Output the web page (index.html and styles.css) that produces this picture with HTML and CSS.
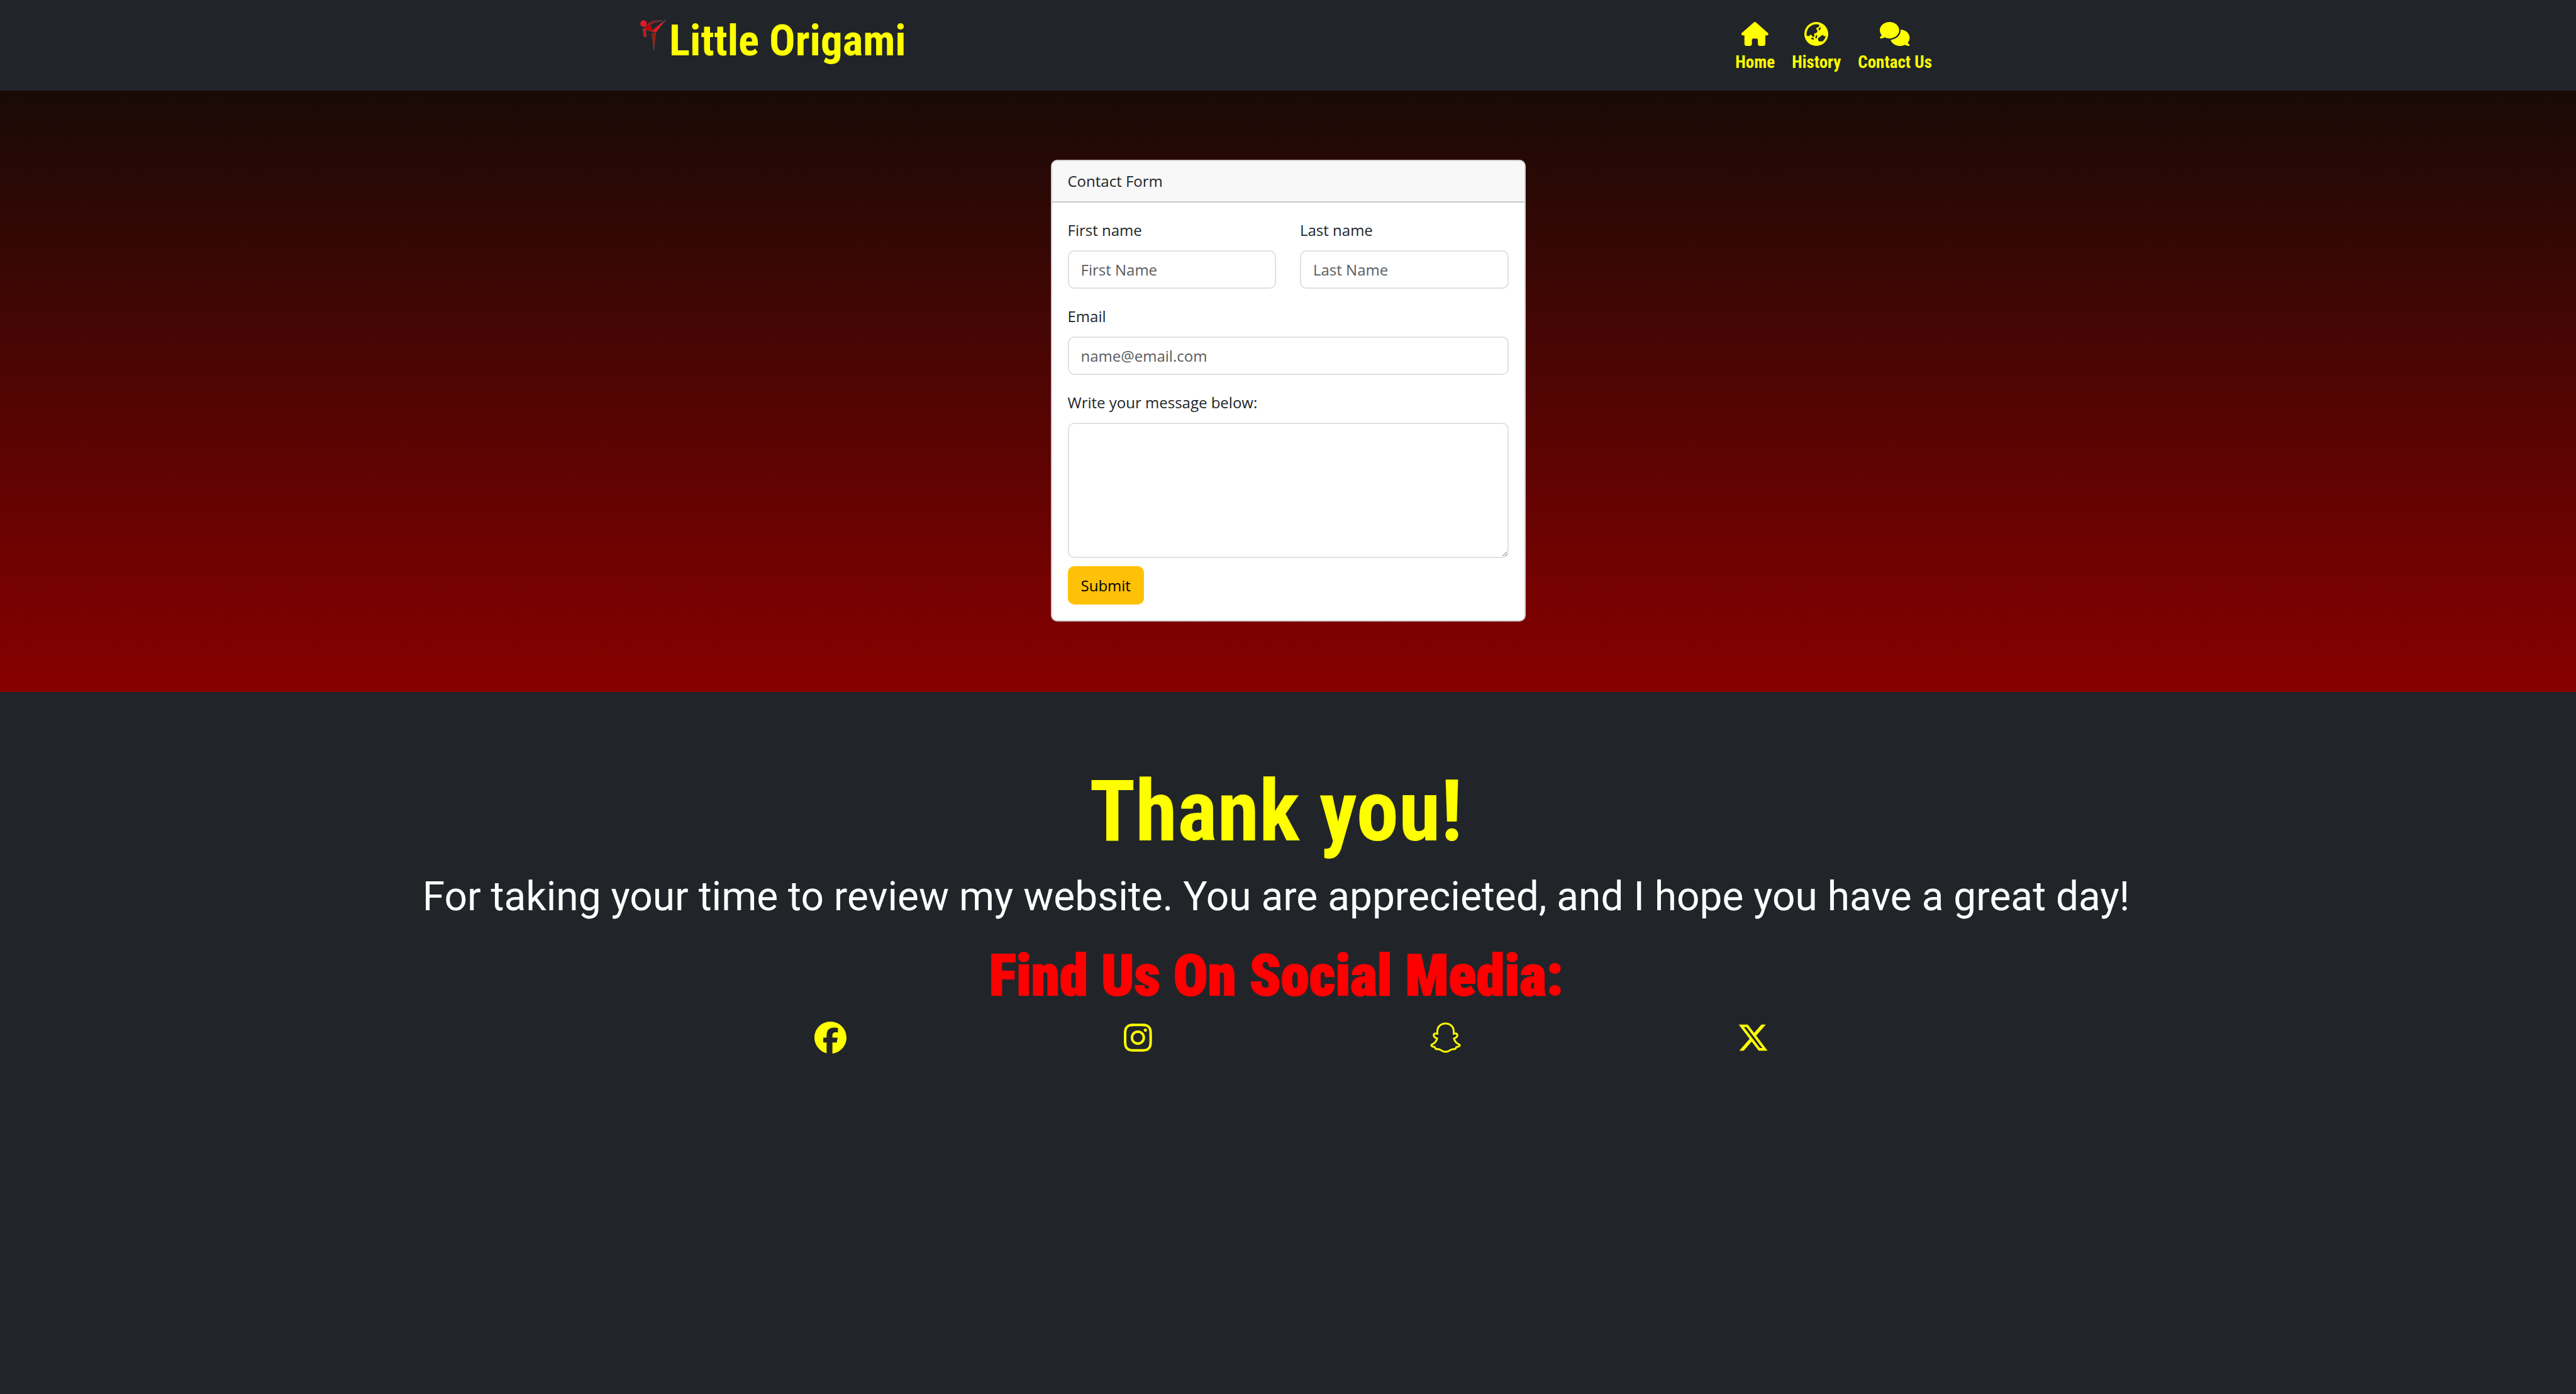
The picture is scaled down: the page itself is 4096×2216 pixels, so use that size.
FILE: index.html
```html
<!DOCTYPE html>
<html lang="en">
<head>
<meta charset="utf-8">
<title>Little Origami</title>
<meta name="viewport" content="width=device-width, initial-scale=1">
<link rel="stylesheet" href="styles.css">
</head>
<body>
<header class="site-header">
  <div class="bar">
    <a class="brand" href="#">
      <svg class="brand-mark" viewBox="32 37 53 64" aria-hidden="true">
        <g stroke="#777" stroke-width="0.5" stroke-linejoin="round">
          <path fill="#b00a0a" d="M50.100 44.700L57.400 41.300 76.500 40 59.300 44 51.700 48.700z"/>
          <path fill="#c40008" d="M50 45L38.300 57 58.200 63.300z"/>
          <path fill="#f80f1c" d="M83.800 38L57.400 59.300 61 64.300 63.500 63.500z"/>
          <path fill="#cf1015" d="M37.500 57.300L42.900 59.300 44.400 72.700H39.400z"/>
          <path fill="#a01508" d="M55.500 66H63.100L59.300 100z"/>
          <ellipse fill="#fb0d1b" cx="38.600" cy="46.200" rx="6" ry="6.200"/>
        </g>
      </svg>
      <span>Little Origami</span>
    </a>
    <nav class="nav">
      <a class="nav-link" href="#">
        <svg class="nav-icon" viewBox="0 0 576 512" aria-hidden="true"><path d="M575.8 255.5c0 18-15 32.100-32 32.100l-32 0 .7 160.200c0 2.700-.2 5.400-.5 8.100l0 16.200c0 22.100-17.900 40-40 40l-16 0c-1.100 0-2.200 0-3.300-.1c-1.400 .1-2.800 .1-4.200 .1L416 512l-24 0c-22.100 0-40-17.900-40-40l0-24 0-64c0-17.700-14.300-32-32-32l-64 0c-17.700 0-32 14.300-32 32l0 64 0 24c0 22.100-17.900 40-40 40l-24 0-31.900 0c-1.500 0-3-.1-4.500-.2c-1.200 .1-2.400 .2-3.600 .2l-16 0c-22.100 0-40-17.900-40-40l0-112c0-.9 0-1.900 .1-2.800l0-69.700-32 0c-18 0-32-14-32-32.100c0-9 3-17 10-24L266.400 8c7-7 15-8 22-8s15 2 21 7L564.800 231.500c8 7 12 15 11 24z"/></svg>
        <span>Home</span>
      </a>
      <a class="nav-link" href="#">
        <svg class="nav-icon" viewBox="0 0 512 512" aria-hidden="true"><path d="M51.7 295.1l31.7 6.3c7.9 1.6 16-.9 21.7-6.6l15.400-15.400c11.600-11.600 31.100-8.400 38.400 6.200l9.300 18.500c4.800 9.600 14.600 15.700 25.400 15.700c15.200 0 26.100-14.600 21.700-29.200l-6-19.900c-4.600-15.400 6.900-30.900 23-30.900h2.300c13.400 0 25.900-6.700 33.300-17.800l10.700-16.100c5.600-8.500 5.300-19.600-.8-27.700l-16.100-21.500c-10.300-13.700-3.300-33.500 13.400-37.700l17-4.300c7.500-1.900 13.600-7.200 16.500-14.400l16.400-40.900C303.4 52.1 280.2 48 256 48C141.1 48 48 141.1 48 256c0 13.4 1.3 26.5 3.700 39.100zm407.700 4.600c-3-.3-6-.1-9 .8l-15.800 4.400c-6.700 1.900-13.800-.9-17.500-6.700l-2-3.100c-6-9.400-16.400-15.100-27.600-15.100s-21.600 5.700-27.600 15.100l-6.100 9.500c-1.400 2.200-3.400 4.100-5.700 5.300L312 330.1c-18.100 10.100-25.500 32.400-17 51.300l5.500 12.400c8.600 19.200 30.700 28.500 50.500 21.100l2.600-1c10-3.700 21.300-2.200 29.900 4.100l1.500 1.100c37.200-29.500 64.100-71.400 74.400-119.500zM0 256a256 256 0 1 1 512 0A256 256 0 1 1 0 256zm144.500 92.100c-2.100 8.600 3.100 17.300 11.600 19.400l32 8c8.600 2.100 17.300-3.100 19.400-11.600s-3.100-17.300-11.600-19.400l-32-8c-8.600-2.100-17.300 3.100-19.400 11.600zm92-20c-2.100 8.600 3.100 17.300 11.600 19.400s17.300-3.100 19.400-11.600l8-32c2.100-8.600-3.100-17.300-11.600-19.400s-17.300 3.100-19.400 11.600l-8 32zM343.2 113.700c-7.900-4-17.500-.7-21.500 7.200l-16 32c-4 7.900-.7 17.500 7.200 21.500s17.500 .7 21.500-7.200l16-32c4-7.900 .7-17.500-7.200-21.500z"/></svg>
        <span>History</span>
      </a>
      <a class="nav-link" href="#">
        <svg class="nav-icon" viewBox="0 0 640 512" aria-hidden="true"><path d="M208 352c114.900 0 208-78.800 208-176S322.900 0 208 0S0 78.800 0 176c0 38.600 14.700 74.300 39.600 103.400c-3.500 9.400-8.700 17.700-14.200 24.700c-4.800 6.200-9.700 11-13.300 14.300c-1.800 1.600-3.300 2.900-4.300 3.700c-.5 .4-.9 .7-1.100 .8l-.2 .2C1 327.200-1.400 334.400 .8 340.900S9.100 352 16 352c21.800 0 43.800-5.600 62.100-12.500c9.200-3.500 17.800-7.400 25.300-11.400C134.100 343.300 169.800 352 208 352zM448 176c0 112.300-99.100 196.900-216.500 207C255.800 457.400 336.400 512 432 512c38.200 0 73.900-8.700 104.700-23.900c7.500 4 16 7.900 25.200 11.400c18.300 6.900 40.300 12.500 62.100 12.500c6.900 0 13.100-4.500 15.200-11.100c2.100-6.600-.2-13.800-5.800-17.900l-.2-.2c-.2-.2-.6-.4-1.100-.8c-1-.8-2.500-2-4.300-3.700c-3.600-3.300-8.500-8.100-13.300-14.300c-5.500-7-10.700-15.400-14.200-24.700c24.900-29 39.600-64.700 39.600-103.400c0-92.800-84.900-168.900-192.600-175.500c.4 5.100 .6 10.300 .6 15.500z"/></svg>
        <span>Contact Us</span>
      </a>
    </nav>
  </div>
</header>

<main class="hero">
  <section class="card">
    <h1 class="card-header">Contact Form</h1>
    <form class="card-body">
      <div class="row">
        <div class="field">
          <label for="first-name">First name</label>
          <input class="control" id="first-name" type="text" placeholder="First Name">
        </div>
        <div class="field">
          <label for="last-name">Last name</label>
          <input class="control" id="last-name" type="text" placeholder="Last Name">
        </div>
      </div>
      <div class="field">
        <label for="email">Email</label>
        <input class="control" id="email" type="email" placeholder="name@email.com">
      </div>
      <div class="field">
        <label for="message">Write your message below:</label>
        <textarea class="control message" id="message"></textarea>
        <button class="submit" type="submit">Submit</button>
      </div>
    </form>
  </section>
</main>

<footer class="footer">
  <div class="closing">
    <h2 class="thanks">Thank you!</h2>
    <p class="note">For taking your time to review my website. You are apprecieted, and I hope you have a great day!</p>
    <h3 class="find-us">Find Us On Social Media:</h3>
  </div>
  <div class="socials">
    <a href="#" aria-label="Facebook"><svg class="social-icon" viewBox="0 0 512 512"><path d="M512 256C512 114.600 397.400 0 256 0S0 114.600 0 256C0 376 82.700 476.800 194.200 504.500V334.200H141.400V256h52.800V222.300c0-87.100 39.400-127.500 125-127.500c16.200 0 44.200 3.200 55.700 6.400V172c-6-.6-16.500-1-29.600-1c-42 0-58.200 15.900-58.200 57.200V256h83.600l-14.400 78.200H287V510.100C413.800 494.800 512 386.900 512 256z"/></svg></a>
    <a href="#" aria-label="Instagram"><svg class="social-icon" viewBox="0 0 448 512"><path d="M224.1 141c-63.600 0-114.900 51.300-114.900 114.900s51.300 114.900 114.900 114.900S339 319.500 339 255.900 287.700 141 224.100 141zm0 189.600c-41.100 0-74.700-33.500-74.700-74.700s33.500-74.700 74.700-74.700 74.700 33.500 74.700 74.700-33.600 74.700-74.700 74.700zm146.400-194.300c0 14.900-12 26.800-26.800 26.800-14.900 0-26.800-12-26.800-26.800s12-26.800 26.800-26.800 26.800 12 26.800 26.800zm76.100 27.200c-1.700-35.900-9.900-67.700-36.200-93.900-26.200-26.200-58-34.400-93.900-36.200-37-2.100-147.900-2.100-184.900 0-35.800 1.700-67.600 9.900-93.900 36.100s-34.400 58-36.200 93.900c-2.100 37-2.100 147.900 0 184.900 1.700 35.900 9.900 67.700 36.200 93.900s58 34.400 93.900 36.200c37 2.100 147.900 2.100 184.900 0 35.900-1.700 67.700-9.900 93.900-36.200 26.200-26.200 34.400-58 36.200-93.900 2.100-37 2.100-147.800 0-184.800zM398.800 388c-7.800 19.600-22.900 34.700-42.600 42.600-29.500 11.700-99.500 9-132.100 9s-102.700 2.600-132.100-9c-19.600-7.800-34.700-22.900-42.600-42.600-11.700-29.500-9-99.500-9-132.100s-2.600-102.700 9-132.100c7.800-19.600 22.900-34.700 42.600-42.600 29.500-11.700 99.500-9 132.100-9s102.700-2.600 132.100 9c19.600 7.800 34.700 22.900 42.600 42.600 11.700 29.500 9 99.500 9 132.100s2.700 102.700-9 132.100z"/></svg></a>
    <a href="#" aria-label="Snapchat"><svg class="social-icon outline" viewBox="117 96 192 192"><path d="M164 170V153C164 126 186 107 213 107S262 126 262 153V170C269 165 283 166 284 177C284 188 272 194 263 197C268 214 283 228 296 234C302 240 297 245 276 249C276 256 272 260 267 261C254 260 248 262 241 267C232 274 222 277 213 277S194 274 185 267C178 262 172 260 159 261C154 260 150 256 150 249C129 245 124 240 130 234C143 228 158 214 163 197C154 194 142 188 142 177C143 166 157 165 164 170z"/></svg></a>
    <a href="#" aria-label="X"><svg class="social-icon" viewBox="0 0 512 512"><path d="M389.200 48h70.600L305.600 224.200 487 464H345L233.700 318.600 106.500 464H35.800L200.700 275.500 26.800 48H172.400L272.900 180.900 389.200 48zM364.400 421.800h39.100L151.100 88h-42L364.400 421.800z"/></svg></a>
  </div>
</footer>
</body>
</html>
```
FILE: styles.css
```css
* { box-sizing: border-box; }

body {
  margin: 0;
  min-height: 100vh;
  background: #212529;
  color: #212529;
  font: 24px/38px "Open Sans", "Noto Sans", sans-serif;
}

h1, h2, h3, p { margin: 0; }

/* Header */
.bar {
  display: flex;
  justify-content: space-between;
  align-items: flex-start;
  max-width: 2112px;
  height: 144px;
  margin: 0 auto;
  padding: 0 32px 0 26px;
}

.brand,
.nav-link {
  color: #ff0;
  font-family: "Roboto Condensed", Roboto, sans-serif;
  font-weight: 700;
  text-decoration: none;
}

.brand {
  display: flex;
  gap: 4px;
  padding-top: 30px;
  font-size: 69px;
  line-height: 70px;
}

.brand-mark { width: 42px; height: 51px; }

.nav { display: flex; gap: 27px; padding-top: 35px; }

.nav-link {
  display: flex;
  flex-direction: column;
  align-items: center;
  gap: 10px;
  font-size: 27px;
  line-height: 32px;
}

.nav-icon { height: 38px; fill: currentColor; }

/* Contact form */
.hero {
  display: flex;
  justify-content: center;
  padding: 110px 24px 112px;
  background: linear-gradient(#190a06, #880000);
}

.card {
  width: 100%;
  max-width: 755px;
  border: 2px solid #cfcfcf;
  border-radius: 10px;
  background: #fff;
  overflow: hidden;
}

.card-header {
  padding: 13px 25px;
  border-bottom: 2px solid #cacaca;
  background: #f8f8f8;
  font-size: 24px;
  font-weight: 400;
  line-height: 38px;
}

.card-body {
  display: flex;
  flex-direction: column;
  gap: 25px;
  padding: 25px;
}

.row { display: grid; grid-template-columns: 1fr 1fr; gap: 38px; }

.field {
  display: flex;
  flex-direction: column;
  align-items: flex-start;
  gap: 13px;
}

.control {
  width: 100%;
  height: 61px;
  padding: 0 19px;
  border: 2px solid #dee2e6;
  border-radius: 10px;
  background: #fff;
  color: #212529;
  font: inherit;
}

.control::placeholder { color: #595c5f; opacity: 1; }

.message { height: 215px; padding: 10px 19px; }

.submit {
  height: 61px;
  padding: 0 21px;
  border: 0;
  border-radius: 10px;
  background: #ffc107;
  color: #000;
  font: inherit;
}

/* Footer */
.footer { padding-top: 112px; text-align: center; }

.closing { padding-right: 38px; }

.thanks {
  color: #ff0;
  font: 700 135px/156px "Roboto Condensed", Roboto, sans-serif;
}

.note {
  padding-top: 10px;
  color: #fff;
  font: 64px/96px Roboto, sans-serif;
}

.find-us {
  padding-top: 22px;
  color: #f00;
  font: 900 91px/110px "Roboto Condensed", Roboto, sans-serif;
  -webkit-text-stroke: 2px #f00;
}

.socials {
  display: grid;
  grid-template-columns: repeat(4, 1fr);
  max-width: 1968px;
  margin: 18px auto 0;
  padding-left: 12px;
}

.socials a { display: flex; justify-content: center; color: #ff0; }

.social-icon { height: 51px; fill: currentColor; }

.outline {
  fill: none;
  stroke: currentColor;
  stroke-width: 11;
  stroke-linejoin: round;
}
```
